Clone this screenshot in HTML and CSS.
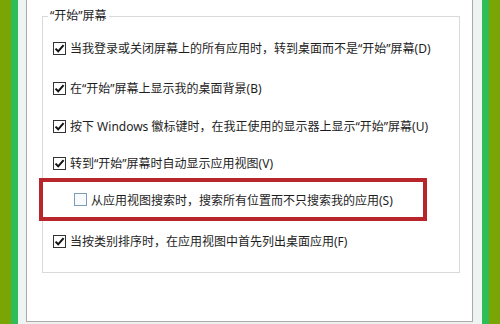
FILE: index.html
```html
<!DOCTYPE html>
<html lang="zh-CN">
<head>
    <meta charset="UTF-8">
    <title>开始屏幕设置</title>
    <link rel="stylesheet" href="styles.css">
</head>
<body>
<div class="screen">
    <div class="edge olive"></div>
    <div class="edge green"></div>
    <div class="edge light"></div>
    <div class="dialog">
        <fieldset class="group">
            <legend>“开始”屏幕</legend>
            <div class="opts">
                <label class="opt row1"><i class="box on"><svg viewBox="0 0 11 11"><path d="M1.5 5.6 L4.2 8.3 L9.6 2.2"/></svg></i>当我登录或关闭屏幕上的所有应用时，转到桌面而不是“开始”屏幕(D)</label>
                <label class="opt row2"><i class="box on"><svg viewBox="0 0 11 11"><path d="M1.5 5.6 L4.2 8.3 L9.6 2.2"/></svg></i>在“开始”屏幕上显示我的桌面背景(B)</label>
                <label class="opt row3"><i class="box on"><svg viewBox="0 0 11 11"><path d="M1.5 5.6 L4.2 8.3 L9.6 2.2"/></svg></i>按下 Windows 徽标键时，在我正使用的显示器上显示“开始”屏幕(U)</label>
                <label class="opt row4"><i class="box on"><svg viewBox="0 0 11 11"><path d="M1.5 5.6 L4.2 8.3 L9.6 2.2"/></svg></i>转到“开始”屏幕时自动显示应用视图(V)</label>
                <div class="mark">
                    <label class="opt"><i class="box off"></i>从应用视图搜索时，搜索所有位置而不只搜索我的应用(S)</label>
                </div>
                <label class="opt row6"><i class="box on"><svg viewBox="0 0 11 11"><path d="M1.5 5.6 L4.2 8.3 L9.6 2.2"/></svg></i>当按类别排序时，在应用视图中首先列出桌面应用(F)</label>
            </div>
        </fieldset>
    </div>
    <div class="edge light r"></div>
    <div class="edge green"></div>
    <div class="edge olive"></div>
</div>
</body>
</html>
```

FILE: styles.css
```css
*{
    margin: 0;
    padding: 0;
    box-sizing: border-box;
}
body{
    width: 500px;
    height: 324px;
    overflow: hidden;
    background: #f0f0f0;
    font-family: "Noto Sans", "Noto Sans CJK SC", sans-serif;
    font-size: 12px;
    color: #1e1e1e;
}
.screen{
    display: flex;
    height: 324px;
}
.edge{
    height: 324px;
}
.olive{
    width: 11px;
    background: #79a604;
}
.green{
    width: 7px;
    background: #2fbd58;
}
.light{
    width: 8px;
    background: #eef4f1;
}
.light.r{
    width: 9px;
}
.dialog{
    width: 447px;
    height: 322px;
    background: #fff;
    border: 1px solid #ababab;
    border-top: none;
    padding: 0 12px 0 15px;
}
.group{
    margin-top: 9px;
    border: 1px solid #d9d9d9;
    padding: 0 0 21px 0;
}
.group legend{
    margin-left: 5px;
    padding: 0 2px;
    font-size: 12px;
    line-height: 14px;
}
.opts{
    padding: 15px 0 0 10px;
    display: flex;
    flex-direction: column;
}
.opt{
    display: flex;
    align-items: center;
    height: 20px;
    white-space: nowrap;
}
.row2{ margin-top: 20px; }
.row3{ margin-top: 18px; }
.row4{ margin-top: 17px; }
.row6{ margin-top: 10px; }
.box{
    width: 13px;
    height: 13px;
    margin-right: 4px;
    display: flex;
    align-items: center;
    justify-content: center;
    background: #fff;
}
.box.on{
    border: 1px solid #333;
}
.box.off{
    border: 1px solid #7f9db5;
    background: #f7fbfd;
}
.box svg{
    width: 11px;
    height: 11px;
}
.box svg path{
    fill: none;
    stroke: #111;
    stroke-width: 2;
}
.mark{
    margin: 5px 0 0 -14px;
    width: 388px;
    height: 43px;
    border: 4px solid #b8262b;
    background: #fff;
    padding-left: 31px;
    display: flex;
    align-items: center;
}
```
